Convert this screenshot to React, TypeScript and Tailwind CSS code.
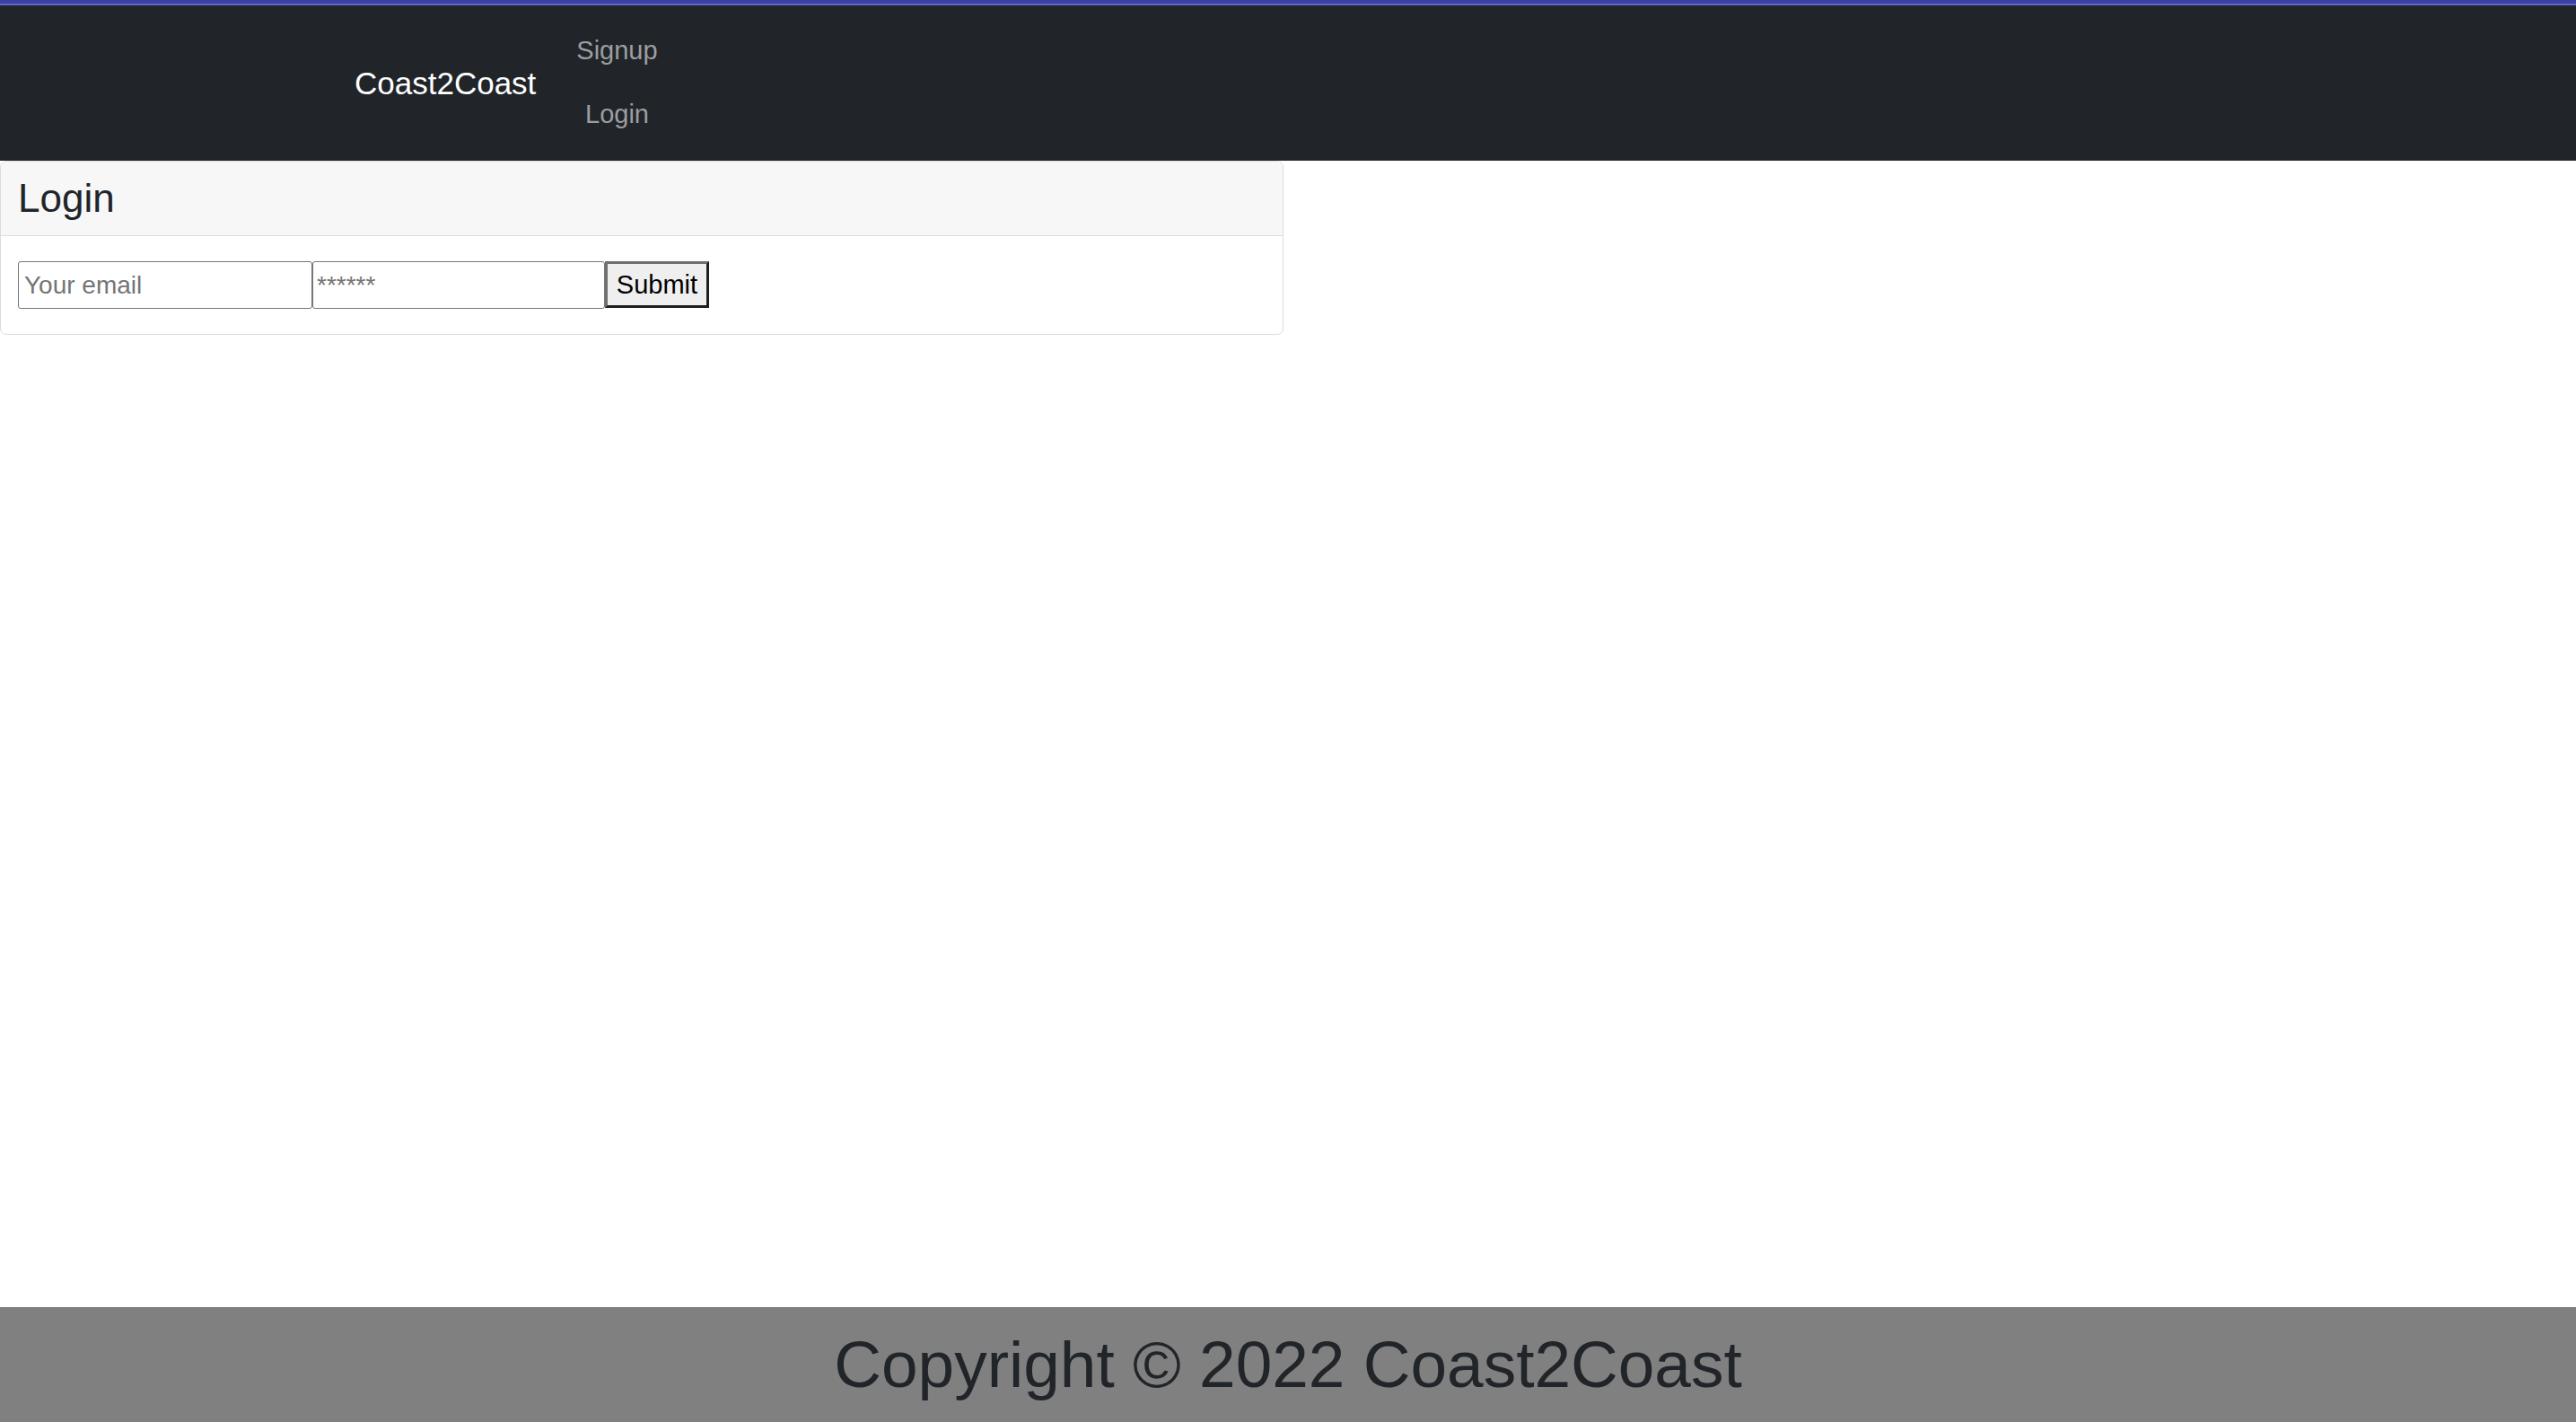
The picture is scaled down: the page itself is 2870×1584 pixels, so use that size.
import React from "react";

export default function App() {
  return (
    <div
      className="min-h-screen flex flex-col bg-white"
      style={{ fontFamily: '"Liberation Sans", Arial, sans-serif' }}
    >
      <div className="h-[4px] bg-[#3a41a6]" />
      <div className="h-[2px] bg-[#6069c0]" />
      <nav className="h-[173px] bg-[#212529] flex items-center pl-[395px]">
        <a className="text-[35px] leading-none text-white">Coast2Coast</a>
        <div className="ml-[45px] flex flex-col items-center">
          <a className="h-[71px] flex items-center text-[29px] text-[#9c9ea1]">Signup</a>
          <a className="h-[71px] flex items-center text-[29px] text-[#9c9ea1]">Login</a>
        </div>
      </nav>
      <main className="flex-1">
        <div className="w-[1430px] border border-[#dcdcdc] rounded-[7px] overflow-hidden">
          <div className="h-[83px] bg-[#f7f7f7] border-b border-[#dcdcdc] pl-[19px] flex items-center">
            <h4 className="text-[44px] font-medium text-[#212529] leading-none">Login</h4>
          </div>
          <div className="px-[19px] py-[28px] flex items-start">
            <input
              type="email"
              placeholder="Your email"
              className="w-[328px] h-[53px] border border-[#767676] rounded-[3px] px-[6px] text-[28px] text-black placeholder:text-[#757575] bg-white outline-none"
            />
            <input
              type="password"
              placeholder="******"
              className="w-[326px] h-[53px] border border-[#767676] rounded-[3px] px-[4px] text-[28px] text-black placeholder:text-[#757575] bg-white outline-none"
            />
            <button className="w-[116px] h-[52px] bg-[#efefef] border-[3px] border-t-[#707070] border-l-[#707070] border-b-[#1e1e1e] border-r-[#1e1e1e] text-[29px] text-black leading-none">
              Submit
            </button>
          </div>
        </div>
      </main>
      <footer className="h-[128px] bg-[#808080] flex items-center justify-center">
        <h1 className="text-[73px] font-medium text-[#212529] leading-[1.2]">
          Copyright © 2022 Coast2Coast
        </h1>
      </footer>
    </div>
  );
}
